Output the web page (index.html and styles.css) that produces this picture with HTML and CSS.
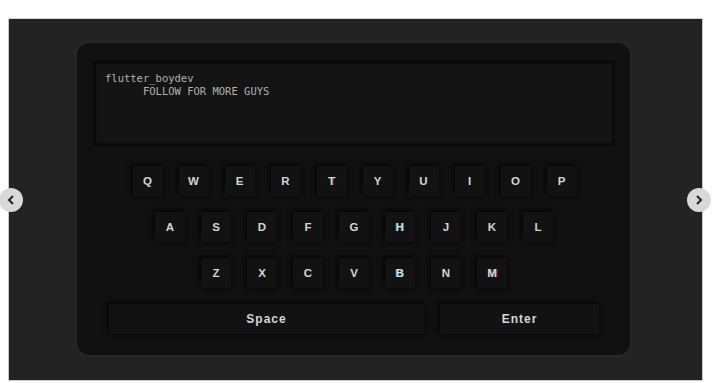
FILE: index.html
```html
<!DOCTYPE html>
<html lang="en">
<head>
  <meta charset="UTF-8">
  <meta name="viewport" content="width=device-width, initial-scale=1.0">
  <title>Keyboard</title>
  <link rel="stylesheet" href="styles.css">
</head>
<body>
  <div class="stage">
    <div class="frame">
      <div class="panel">
        <div class="screen">
          <pre class="screen-text">flutter_boydev
      FOLLOW FOR MORE GUYS</pre>
        </div>

        <div class="keys">
          <div class="row">
            <div class="key">Q</div>
            <div class="key">W</div>
            <div class="key">E</div>
            <div class="key">R</div>
            <div class="key tint-pink">T</div>
            <div class="key">Y</div>
            <div class="key">U</div>
            <div class="key">I</div>
            <div class="key">O</div>
            <div class="key">P</div>
          </div>
          <div class="row">
            <div class="key">A</div>
            <div class="key">S</div>
            <div class="key">D</div>
            <div class="key">F</div>
            <div class="key">G</div>
            <div class="key tint-blue">H</div>
            <div class="key">J</div>
            <div class="key">K</div>
            <div class="key">L</div>
          </div>
          <div class="row">
            <div class="key">Z</div>
            <div class="key">X</div>
            <div class="key">C</div>
            <div class="key">V</div>
            <div class="key tint-blue">B</div>
            <div class="key">N</div>
            <div class="key tint-pink">M</div>
          </div>
          <div class="row">
            <div class="key key-space">Space</div>
            <div class="key key-enter">Enter</div>
          </div>
        </div>
      </div>
    </div>

    <button class="arrow arrow-left" aria-label="previous">
      <svg width="12" height="12" viewBox="0 0 12 12"><path d="M8 2 L4 6 L8 10" fill="none" stroke="#222" stroke-width="2"/></svg>
    </button>
    <button class="arrow arrow-right" aria-label="next">
      <svg width="12" height="12" viewBox="0 0 12 12"><path d="M4 2 L8 6 L4 10" fill="none" stroke="#222" stroke-width="2"/></svg>
    </button>
  </div>
</body>
</html>
```

FILE: styles.css
```css
* {
  margin: 0;
  padding: 0;
  box-sizing: border-box;
}
html, body {
  width: 100%;
  height: 100%;
  overflow: hidden;
  background: #fff;
  font-family: "Liberation Sans", Arial, sans-serif;
}
.stage {
  position: relative;
  padding: 18px 9px 0 8px;
}
.frame {
  height: 363px;
  background: #232323;
  border: 1px solid #c8c8c8;
  border-top-color: #d8d8d8;
  padding: 24px 72px 0 68px;
}
.panel {
  height: 312px;
  background: #111;
  border-radius: 12px;
  box-shadow: 0 0 3px 1px #2c2c2c;
  padding: 18px 15px 0 16px;
}
.screen {
  height: 85px;
  background: #141414;
  border: 2px solid #0a0a0a;
  box-shadow: inset 0 0 3px #000;
  padding: 9px 10px;
}
.screen-text {
  font-family: "DejaVu Sans Mono", "Liberation Mono", monospace;
  font-size: 10.5px;
  line-height: 13px;
  color: #b2b2b2;
}
.keys {
  display: flex;
  flex-direction: column;
  gap: 16px;
  margin-top: 20px;
}
.row {
  display: flex;
  justify-content: center;
  gap: 16px;
}
.key {
  width: 30px;
  height: 30px;
  display: flex;
  align-items: center;
  justify-content: center;
  background: #121212;
  color: #d6d6d6;
  font-size: 11.5px;
  font-weight: bold;
  box-shadow: -2px -2px 4px #060606, 2px 2px 3px #0d0d0d;
}
.row:first-child {
  margin-left: 1px;
}
.key-space {
  width: 315px;
  letter-spacing: 1px;
  font-size: 12px;
}
.key-enter {
  width: 159px;
  letter-spacing: 1px;
  font-size: 12px;
}
.tint-pink {
  text-shadow: 1px 0 0 rgba(200, 80, 110, 0.6);
}
.tint-blue {
  color: #cfe6f0;
  text-shadow: -1px 0 0 rgba(80, 170, 220, 0.5);
}
.arrow {
  position: absolute;
  top: 188px;
  width: 24px;
  height: 24px;
  border: none;
  border-radius: 50%;
  background: #d9d9d9;
  display: flex;
  align-items: center;
  justify-content: center;
}
.arrow-left {
  left: -1px;
}
.arrow-right {
  left: 687px;
}
```
